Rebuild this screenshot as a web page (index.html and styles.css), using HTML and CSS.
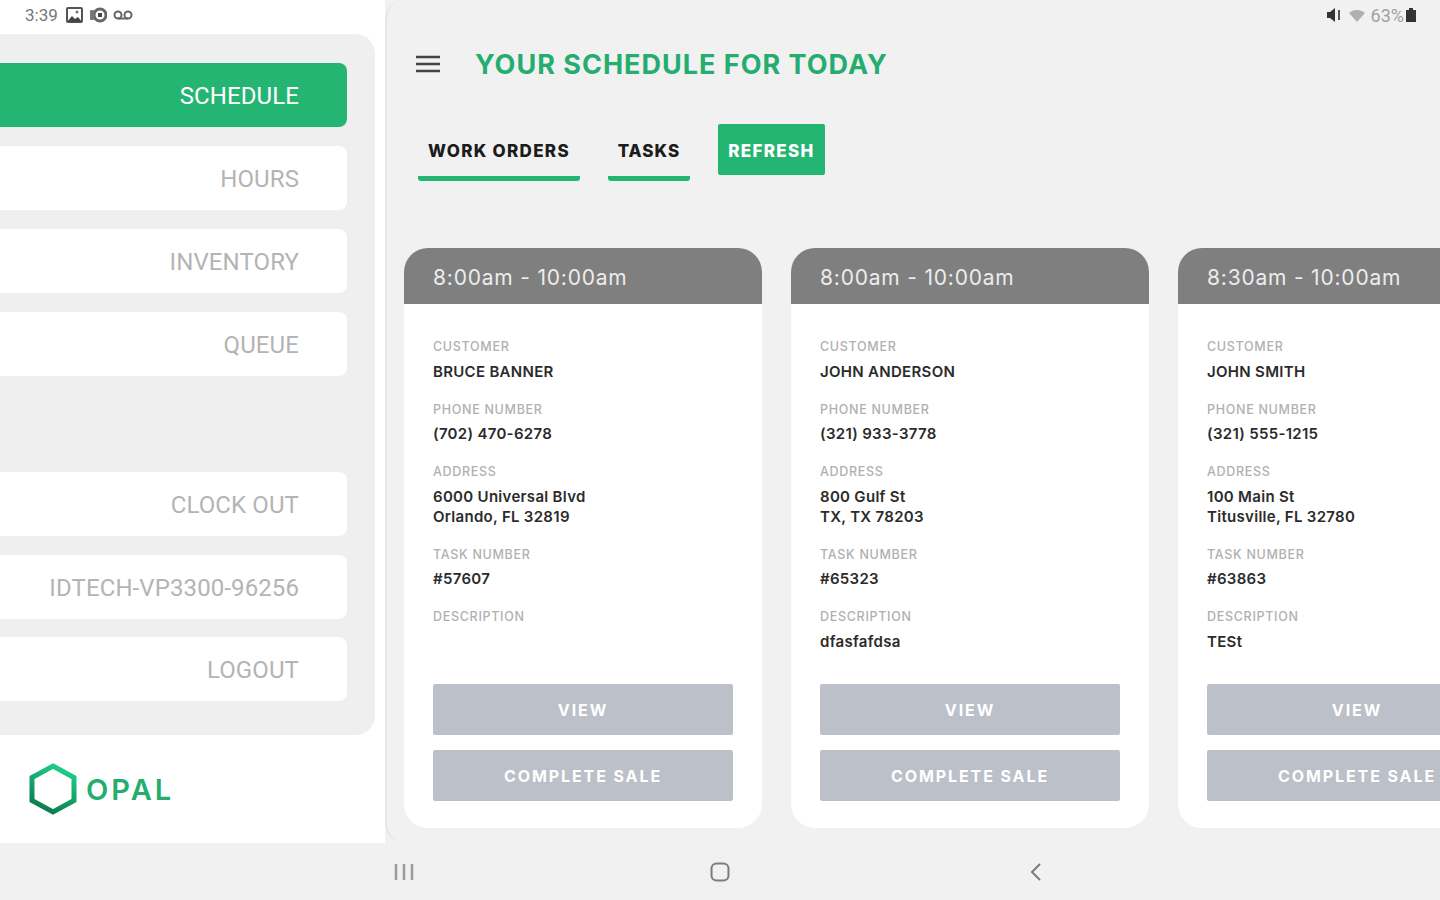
FILE: index.html
```html
<!DOCTYPE html>
<html lang="en">
<head>
    <meta charset="UTF-8">
    <meta name="viewport" content="width=device-width, initial-scale=1.0">
    <title>Schedule</title>
    <link rel="stylesheet" href="styles.css">
</head>
<body>
    <div class="app">
        <aside class="sidebar">
            <div class="status-left">
                <span class="clock">3:39</span>
                <svg width="17" height="16" viewBox="0 0 17 16"><rect x="1" y="1" width="15" height="14" rx="1" fill="none" stroke="#555" stroke-width="2"/><path d="M1 15l5-6 3 3 3-2 4 5z" fill="#444"/><circle cx="11" cy="5" r="1.5" fill="#777"/></svg>
                <svg width="18" height="16" viewBox="0 0 18 16"><circle cx="11" cy="8" r="6" fill="none" stroke="#666" stroke-width="3"/><rect x="1" y="3" width="4" height="10" rx="1" fill="#777"/><rect x="9" y="6" width="4" height="4" fill="#444"/></svg>
                <svg width="20" height="10" viewBox="0 0 20 10"><circle cx="5" cy="5" r="3.5" fill="none" stroke="#666" stroke-width="2"/><circle cx="15" cy="5" r="3.5" fill="none" stroke="#666" stroke-width="2"/><path d="M5 8.5h10" stroke="#666" stroke-width="2"/></svg>
            </div>

            <nav class="menu">
                <div class="menu-group">
                    <a class="menu-item active">SCHEDULE</a>
                    <a class="menu-item">HOURS</a>
                    <a class="menu-item">INVENTORY</a>
                    <a class="menu-item">QUEUE</a>
                </div>
                <div class="menu-group menu-bottom">
                    <a class="menu-item">CLOCK OUT</a>
                    <a class="menu-item">IDTECH-VP3300-96256</a>
                    <a class="menu-item">LOGOUT</a>
                </div>
            </nav>

            <div class="logo">
                <svg width="48" height="52" viewBox="0 0 48 52">
                    <defs>
                        <linearGradient id="hexGrad" x1="0.7" y1="0" x2="0.3" y2="1">
                            <stop offset="0" stop-color="#1fcf8a"/>
                            <stop offset="1" stop-color="#0b7a4c"/>
                        </linearGradient>
                    </defs>
                    <path d="M24 3L45 14.5V37.5L24 49L3 37.5V14.5Z" fill="none" stroke="url(#hexGrad)" stroke-width="5"/>
                </svg>
                <span class="logo-text">OPAL</span>
            </div>
        </aside>

        <main class="main">
            <div class="status-right">
                <svg width="16" height="14" viewBox="0 0 16 14"><path d="M0 4h3l5-4v14l-5-4H0z" fill="#333"/><path d="M12 2v10" stroke="#555" stroke-width="2"/></svg>
                <svg width="18" height="14" viewBox="0 0 18 14"><path d="M1 5c4-4 12-4 16 0l-8 9z" fill="#b0b0b0"/></svg>
                <span class="battery-text">63%</span>
                <svg width="10" height="14" viewBox="0 0 10 14"><path d="M3 0h4v2h3v12H0V2h3z" fill="#333"/></svg>
            </div>

            <header class="title-row">
                <svg class="hamburger" width="24" height="18" viewBox="0 0 24 18"><path d="M0 2h24M0 9h24M0 16h24" stroke="#444" stroke-width="2.5"/></svg>
                <h1>YOUR SCHEDULE FOR TODAY</h1>
            </header>

            <div class="tabs">
                <button class="tab">WORK ORDERS</button>
                <button class="tab tab-tasks">TASKS</button>
                <button class="refresh">REFRESH</button>
            </div>

            <section class="cards">
                <article class="card">
                    <div class="card-time">8:00am - 10:00am</div>
                    <div class="card-body">
                        <div class="field"><label>CUSTOMER</label><p>BRUCE BANNER</p></div>
                        <div class="field"><label>PHONE NUMBER</label><p>(702) 470-6278</p></div>
                        <div class="field"><label>ADDRESS</label><p>6000 Universal Blvd<br>Orlando, FL 32819</p></div>
                        <div class="field"><label>TASK NUMBER</label><p>#57607</p></div>
                        <div class="field"><label>DESCRIPTION</label><p></p></div>
                        <div class="actions">
                            <button>VIEW</button>
                            <button>COMPLETE SALE</button>
                        </div>
                    </div>
                </article>

                <article class="card">
                    <div class="card-time">8:00am - 10:00am</div>
                    <div class="card-body">
                        <div class="field"><label>CUSTOMER</label><p>JOHN ANDERSON</p></div>
                        <div class="field"><label>PHONE NUMBER</label><p>(321) 933-3778</p></div>
                        <div class="field"><label>ADDRESS</label><p>800 Gulf St<br>TX, TX 78203</p></div>
                        <div class="field"><label>TASK NUMBER</label><p>#65323</p></div>
                        <div class="field"><label>DESCRIPTION</label><p>dfasfafdsa</p></div>
                        <div class="actions">
                            <button>VIEW</button>
                            <button>COMPLETE SALE</button>
                        </div>
                    </div>
                </article>

                <article class="card">
                    <div class="card-time">8:30am - 10:00am</div>
                    <div class="card-body">
                        <div class="field"><label>CUSTOMER</label><p>JOHN SMITH</p></div>
                        <div class="field"><label>PHONE NUMBER</label><p>(321) 555-1215</p></div>
                        <div class="field"><label>ADDRESS</label><p>100 Main St<br>Titusville, FL 32780</p></div>
                        <div class="field"><label>TASK NUMBER</label><p>#63863</p></div>
                        <div class="field"><label>DESCRIPTION</label><p>TESt</p></div>
                        <div class="actions">
                            <button>VIEW</button>
                            <button>COMPLETE SALE</button>
                        </div>
                    </div>
                </article>
            </section>
        </main>
    </div>

    <footer class="nav-bar">
        <svg width="20" height="18" viewBox="0 0 20 18"><path d="M2 1v16M10 1v16M18 1v16" stroke="#9a9a9a" stroke-width="2.5"/></svg>
        <svg width="20" height="20" viewBox="0 0 20 20"><rect x="1.5" y="1.5" width="17" height="17" rx="5" fill="none" stroke="#7c7c7c" stroke-width="2"/></svg>
        <svg width="12" height="20" viewBox="0 0 12 20"><path d="M10 2L2 10l8 8" fill="none" stroke="#7c7c7c" stroke-width="2"/></svg>
    </footer>
</body>
</html>
```

FILE: styles.css
```css
/* Page */
body {
    margin: 0;
    width: 1440px;
    height: 900px;
    overflow: hidden;
    background-color: #f1f1f1;
    font-family: Inter, "Liberation Sans", sans-serif;
}

.app {
    display: flex;
    height: 843px;
}

/* Sidebar */
.sidebar {
    width: 385px;
    flex-shrink: 0;
    background-color: #fff;
    display: flex;
    flex-direction: column;
}

.status-left {
    height: 34px;
    padding: 0 0 4px 25px;
    box-sizing: border-box;
    display: flex;
    align-items: center;
    gap: 6px;
}

.clock {
    font-family: Roboto, sans-serif;
    font-size: 17px;
    color: #777;
    margin-right: 2px;
}

.menu {
    width: 375px;
    height: 701px;
    box-sizing: border-box;
    padding-top: 29px;
    background-color: #efefef;
    border-radius: 0 20px 20px 0;
    display: flex;
    flex-direction: column;
    gap: 96px;
}

.menu-group {
    display: flex;
    flex-direction: column;
    gap: 19px;
}

.menu-bottom {
    gap: 18.5px;
}

.menu-item {
    width: 347px;
    height: 64px;
    box-sizing: border-box;
    padding: 2px 48px 0 0;
    background-color: #fff;
    border-radius: 0 8px 8px 0;
    display: flex;
    align-items: center;
    justify-content: flex-end;
    font-family: Roboto, sans-serif;
    font-size: 24px;
    letter-spacing: 0.1px;
    color: #b4b4b4;
}

.menu-item.active {
    background-color: #25b573;
    color: #fff;
}

.logo {
    display: flex;
    align-items: center;
    gap: 9px;
    padding: 28px 0 0 29px;
}

.logo-text {
    font-size: 29px;
    font-weight: 600;
    letter-spacing: 3px;
    color: #25ad70;
}

/* Main area */
.main {
    flex: 1;
    min-width: 0;
    box-sizing: border-box;
    background-color: #f1f1f1;
    border-left: 2px solid #e6e6e6;
    border-radius: 20px 0 0 20px;
    overflow: hidden;
}

.status-right {
    height: 34px;
    box-sizing: border-box;
    padding: 0 24px 4px 0;
    display: flex;
    align-items: center;
    justify-content: flex-end;
    gap: 5px;
}

.battery-text {
    font-family: Roboto, sans-serif;
    font-size: 18px;
    color: #a0a0a0;
    margin-right: -3px;
}

.title-row {
    height: 60px;
    display: flex;
    align-items: center;
    padding-left: 29px;
}

.hamburger {
    margin-right: 35px;
}

h1 {
    margin: 0;
    font-size: 27px;
    font-weight: 700;
    letter-spacing: 1px;
    white-space: nowrap;
    color: #25ad70;
}

/* Tabs */
.tabs {
    height: 57px;
    margin-top: 30px;
    padding-left: 31px;
    display: flex;
    align-items: flex-start;
    gap: 28px;
}

.tab,
.refresh {
    font-family: Inter, sans-serif;
    font-size: 17px;
    font-weight: 800;
    letter-spacing: 1.3px;
    white-space: nowrap;
    cursor: pointer;
}

.tab {
    height: 57px;
    padding: 2px 10px 0;
    background: none;
    color: #1c1c1c;
    border: none;
    border-bottom: 5px solid #25b573;
    border-radius: 0 0 3px 3px;
}

.tab-tasks {
    width: 82px;
    padding: 2px 0 0;
    letter-spacing: 1px;
}

.refresh {
    width: 107px;
    height: 51px;
    padding: 3px 0 0;
    background-color: #25b573;
    color: #fff;
    border: none;
    border-radius: 2px;
}

/* Work order cards */
.cards {
    margin-top: 67px;
    padding-left: 17px;
    display: flex;
    gap: 29px;
}

.card {
    width: 358px;
    height: 580px;
    flex-shrink: 0;
    display: flex;
    flex-direction: column;
    background-color: #fff;
    border-radius: 24px;
    overflow: hidden;
}

.card-time {
    height: 56px;
    box-sizing: border-box;
    padding: 2px 0 0 29px;
    display: flex;
    align-items: center;
    background-color: #7f7f7f;
    color: #ececec;
    font-size: 21px;
    letter-spacing: 0.8px;
}

.card-body {
    flex: 1;
    display: flex;
    flex-direction: column;
    padding: 35px 29px 27px;
}

.field {
    margin-bottom: 20px;
}

.field label {
    display: block;
    height: 16px;
    line-height: 16px;
    margin-bottom: 6.5px;
    font-size: 12.5px;
    font-weight: 500;
    letter-spacing: 0.7px;
    color: #b0b0b0;
}

.field p {
    margin: 0;
    min-height: 20px;
    font-size: 15px;
    font-weight: 600;
    line-height: 20px;
    letter-spacing: 0.3px;
    color: #2b2b2b;
}

.actions {
    margin-top: auto;
    display: flex;
    flex-direction: column;
    gap: 15px;
}

.actions button {
    width: 300px;
    height: 51px;
    padding: 1px 0 0;
    border: none;
    border-radius: 2px;
    background-color: #bcc0c9;
    color: #fff;
    font-family: Inter, sans-serif;
    font-size: 16px;
    font-weight: 700;
    letter-spacing: 1.9px;
    white-space: nowrap;
}

/* Android nav bar */
.nav-bar {
    height: 57px;
    width: 948px;
    margin: 0 auto;
    display: grid;
    grid-template-columns: repeat(3, 316px);
    justify-items: center;
    align-items: center;
}
```
